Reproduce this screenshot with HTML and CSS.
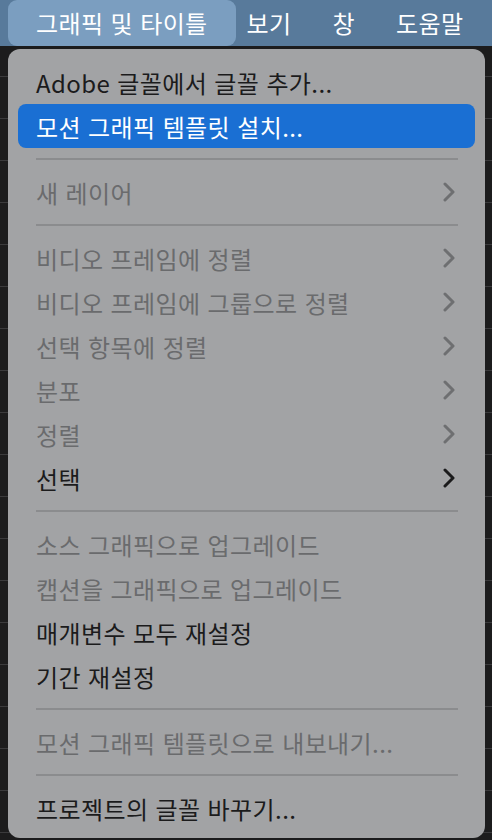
FILE: index.html
```html
<!DOCTYPE html>
<html lang="ko">
<head>
<meta charset="utf-8">
<title>그래픽 및 타이틀 메뉴</title>
<link rel="stylesheet" href="styles.css">
</head>
<body>
<header class="menubar">
  <span class="bar-item bar-item--active">그래픽 및 타이틀</span>
  <nav class="bar-rest">
    <span class="bar-item">보기</span>
    <span class="bar-item">창</span>
    <span class="bar-item">도움말</span>
  </nav>
</header>
<div class="stage">
  <ul class="menu">
    <li class="row">Adobe 글꼴에서 글꼴 추가...</li>
    <li class="row row--selected">모션 그래픽 템플릿 설치...</li>
    <li class="sep"></li>
    <li class="row row--disabled">새 레이어<svg class="chev" viewBox="0 0 12 20"><path d="M2 2 L10 10 L2 18"/></svg></li>
    <li class="sep"></li>
    <li class="row row--disabled">비디오 프레임에 정렬<svg class="chev" viewBox="0 0 12 20"><path d="M2 2 L10 10 L2 18"/></svg></li>
    <li class="row row--disabled">비디오 프레임에 그룹으로 정렬<svg class="chev" viewBox="0 0 12 20"><path d="M2 2 L10 10 L2 18"/></svg></li>
    <li class="row row--disabled">선택 항목에 정렬<svg class="chev" viewBox="0 0 12 20"><path d="M2 2 L10 10 L2 18"/></svg></li>
    <li class="row row--disabled">분포<svg class="chev" viewBox="0 0 12 20"><path d="M2 2 L10 10 L2 18"/></svg></li>
    <li class="row row--disabled">정렬<svg class="chev" viewBox="0 0 12 20"><path d="M2 2 L10 10 L2 18"/></svg></li>
    <li class="row">선택<svg class="chev" viewBox="0 0 12 20"><path d="M2 2 L10 10 L2 18"/></svg></li>
    <li class="sep"></li>
    <li class="row row--disabled">소스 그래픽으로 업그레이드</li>
    <li class="row row--disabled">캡션을 그래픽으로 업그레이드</li>
    <li class="row">매개변수 모두 재설정</li>
    <li class="row">기간 재설정</li>
    <li class="sep"></li>
    <li class="row row--disabled">모션 그래픽 템플릿으로 내보내기...</li>
    <li class="sep"></li>
    <li class="row">프로젝트의 글꼴 바꾸기...</li>
  </ul>
</div>
</body>
</html>
```
FILE: styles.css
```css
* { box-sizing: border-box; }
html, body {
  margin: 0;
  padding: 0;
}
body {
  width: 492px;
  height: 840px;
  overflow: hidden;
  font-family: "Noto Sans CJK KR", "Noto Sans", sans-serif;
  background-color: #1c1c1d;
  background-image: repeating-linear-gradient(to bottom, transparent 0, transparent 41px, #3a3a3c 41px, #3a3a3c 42px);
  background-position: 0 35px;
}
.menubar {
  height: 46px;
  background: #587a9b;
  display: flex;
  align-items: center;
  padding-left: 8px;
  color: #ffffff;
  font-size: 24px;
  letter-spacing: 0.4px;
  line-height: 1;
}
.bar-item {
  display: flex;
  align-items: center;
  height: 46px;
  white-space: nowrap;
}
.bar-item--active {
  background: #7b9ec0;
  border-radius: 9px;
  padding: 0 28px;
}
.bar-rest {
  display: flex;
  gap: 41px;
  margin-left: 11px;
}
.stage {
  padding: 3px 7px 2px 8px;
}
.menu {
  list-style: none;
  margin: 0;
  padding: 11px 0 8px;
  background: #a2a3a5;
  border-radius: 12px;
  font-size: 24px;
  letter-spacing: 0.4px;
  color: #1b1b1c;
}
.row {
  height: 44px;
  display: flex;
  align-items: center;
  justify-content: space-between;
  margin: 0 10px;
  padding: 0 20px 0 18px;
  border-radius: 8px;
  white-space: nowrap;
}
.row--selected {
  background: #1a6fd3;
  color: #ffffff;
}
.row--disabled {
  color: #6a6b6d;
}
.chev {
  width: 12px;
  height: 20px;
  flex: none;
}
.chev path {
  fill: none;
  stroke: currentColor;
  stroke-width: 3;
  stroke-linecap: round;
  stroke-linejoin: round;
}
.row--disabled .chev { color: #6e6f71; }
.sep {
  height: 22px;
  display: flex;
  align-items: center;
  margin: 0 27px 0 28px;
}
.sep::before {
  content: "";
  flex: 1;
  height: 2px;
  background: #8b8c8e;
}
```
